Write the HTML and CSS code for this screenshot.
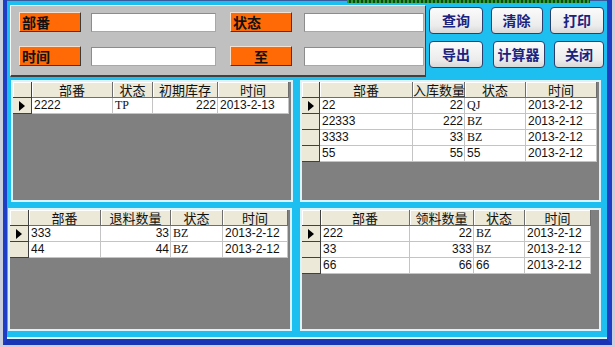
FILE: index.html
```html
<!DOCTYPE html>
<html lang="zh-CN">
<head>
<meta charset="utf-8">
<title>库存查询</title>
<link rel="stylesheet" href="styles.css">
</head>
<body>
<div class="window">
  <div class="titlebar"><span class="dots"></span></div>
  <div class="client">
    <div class="top">
      <div class="filter">
        <div class="frow">
          <div class="lbl">部番</div>
          <div class="inp"></div>
          <div class="lbl gap">状态</div>
          <div class="inp wide"></div>
        </div>
        <div class="frow">
          <div class="lbl">时间</div>
          <div class="inp"></div>
          <div class="lbl gap center">至</div>
          <div class="inp wide"></div>
        </div>
      </div>
      <div class="buttons">
        <div class="brow">
          <div class="btn w54">查询</div>
          <div class="btn w52">清除</div>
          <div class="btn w54">打印</div>
        </div>
        <div class="brow">
          <div class="btn w54">导出</div>
          <div class="btn w52">计算器</div>
          <div class="btn w50">关闭</div>
        </div>
      </div>
    </div>

    <div class="grids">
      <div class="panel">
        <div class="dg g1">
          <div class="h ind"></div><div class="h">部番</div><div class="h">状态</div><div class="h">初期库存</div><div class="h">时间</div>
          <div class="ind cur"><i class="tri"></i></div><div class="c">2222</div><div class="c s">TP</div><div class="c r">222</div><div class="c">2013-2-13</div>
        </div>
      </div>
      <div class="panel">
        <div class="dg g2">
          <div class="h ind"></div><div class="h">部番</div><div class="h">入库数量</div><div class="h">状态</div><div class="h">时间</div>
          <div class="ind cur"><i class="tri"></i></div><div class="c">22</div><div class="c r">22</div><div class="c s">QJ</div><div class="c">2013-2-12</div>
          <div class="ind"></div><div class="c">22333</div><div class="c r">222</div><div class="c s">BZ</div><div class="c">2013-2-12</div>
          <div class="ind"></div><div class="c">3333</div><div class="c r">33</div><div class="c s">BZ</div><div class="c">2013-2-12</div>
          <div class="ind"></div><div class="c">55</div><div class="c r">55</div><div class="c">55</div><div class="c">2013-2-12</div>
        </div>
      </div>
      <div class="panel shift">
        <div class="dg g3">
          <div class="h ind"></div><div class="h">部番</div><div class="h">退料数量</div><div class="h">状态</div><div class="h">时间</div>
          <div class="ind cur"><i class="tri"></i></div><div class="c">333</div><div class="c r">33</div><div class="c s">BZ</div><div class="c">2013-2-12</div>
          <div class="ind"></div><div class="c">44</div><div class="c r">44</div><div class="c s">BZ</div><div class="c">2013-2-12</div>
        </div>
      </div>
      <div class="panel">
        <div class="dg g4">
          <div class="h ind"></div><div class="h">部番</div><div class="h">领料数量</div><div class="h">状态</div><div class="h">时间</div>
          <div class="ind cur"><i class="tri"></i></div><div class="c">222</div><div class="c r">22</div><div class="c s">BZ</div><div class="c">2013-2-12</div>
          <div class="ind"></div><div class="c">33</div><div class="c r">333</div><div class="c s">BZ</div><div class="c">2013-2-12</div>
          <div class="ind"></div><div class="c">66</div><div class="c r">66</div><div class="c">66</div><div class="c">2013-2-12</div>
        </div>
      </div>
    </div>
  </div>
</div>
</body>
</html>
```
FILE: styles.css
```css
* { box-sizing: border-box; }
html, body { margin: 0; padding: 0; }
body {
  width: 615px;
  height: 347px;
  overflow: hidden;
  background: #c9cfdc;
  font-family: "Noto Sans CJK SC", "Liberation Sans", sans-serif;
}
.window {
  margin-left: 3px;
  width: 609px;
  height: 345px;
  border-left: 4px solid #1f3ec6;
  border-right: 5px solid #1f3ec6;
  border-bottom: 6px solid #1934b4;
  background: #1cbff0;
  display: flex;
  flex-direction: column;
}
.titlebar {
  height: 3px;
  background: #1cbff0;
  border-top: 1px solid #3a5a9a;
  display: flex;
}
.dots {
  margin-left: 340px;
  width: 243px;
  height: 3px;
  margin-top: -1px;
  background: repeating-linear-gradient(90deg, #2f9a2f 0 2px, #0d4a16 2px 4px);
}
.client {
  flex: 1;
  border-bottom: 2px solid #e2f6fd;
  padding-top: 2px;
}
.top {
  display: flex;
  align-items: flex-start;
  margin-left: 3px;
  height: 72px;
}
.filter {
  width: 416px;
  height: 72px;
  background: #c0c0c0;
  border-top: 1px solid #ffffff;
  border-left: 1px solid #ffffff;
  border-right: 1px solid #404040;
  border-bottom: 2px solid #404040;
  padding: 6px 0 0 8px;
  display: flex;
  flex-direction: column;
  gap: 14px;
}
.frow {
  display: flex;
  align-items: center;
  height: 20px;
}
.lbl {
  width: 62px;
  height: 20px;
  background: #ff6a06;
  border-top: 1px solid #f4e0d0;
  border-left: 1px solid #f4e0d0;
  border-right: 1px solid #3a3a3a;
  border-bottom: 1px solid #3a3a3a;
  font-weight: 700;
  font-size: 14px;
  line-height: 18px;
  color: #111;
  padding-left: 2px;
}
.lbl.gap { margin-left: 14px; }
.lbl.center { text-align: center; padding-left: 0; }
.inp {
  margin-left: 10px;
  width: 125px;
  height: 19px;
  background: #ffffff;
  border: 1px solid #a8a8a8;
  border-top-color: #8c8c8c;
  border-left-color: #8c8c8c;
}
.inp.wide { margin-left: 12px; width: 120px; }
.buttons {
  margin-left: 3px;
  width: 175px;
  padding-top: 2px;
  display: flex;
  flex-direction: column;
  gap: 7px;
}
.brow {
  display: flex;
  justify-content: space-between;
}
.btn {
  height: 27px;
  border: 1px solid #2a3f6e;
  border-radius: 4px;
  background: linear-gradient(#fbfbfb, #ececec 70%, #d8d8d8);
  color: #1a2380;
  font-weight: 700;
  font-size: 14px;
  line-height: 24px;
  text-align: center;
}
.w54 { width: 54px; }
.w52 { width: 52px; }
.w50 { width: 50px; }

.grids {
  margin-top: 3px;
  margin-left: 4px;
  display: grid;
  grid-template-columns: 282px 301px;
  grid-template-rows: 122px 123px;
  column-gap: 7px;
  row-gap: 6px;
}
.panel {
  border: 2px solid #dcf3fb;
  background: #808080;
  overflow: hidden;
}
.panel.shift {
  margin-left: -3px;
  margin-right: 1px;
}
.dg {
  display: grid;
  grid-auto-rows: 16px;
  width: max-content;
}
.g1 { grid-template-columns: 19px 81px 40px 65px 71px; }
.g2 { grid-template-columns: 18px 93px 52px 61px 71px; }
.g3 { grid-template-columns: 19px 72px 70px 52px 65px; }
.g4 { grid-template-columns: 19px 89px 64px 51px 66px; }

.h {
  background: #ece9d8;
  border-right: 1px solid #6e6e6e;
  border-bottom: 1px solid #6e6e6e;
  box-shadow: inset 1px 1px 0 #ffffff;
  font-size: 13px;
  line-height: 15px;
  text-align: center;
  color: #111;
  white-space: nowrap;
}
.c {
  background: #ffffff;
  border-right: 1px solid #c4c4c4;
  border-bottom: 1px solid #c4c4c4;
  font-family: "Liberation Sans", sans-serif;
  font-size: 12px;
  line-height: 15px;
  padding: 0 2px;
  color: #111;
  white-space: nowrap;
}
.c.r { text-align: right; padding-right: 1px; }
.c.s { font-family: "Liberation Serif", serif; }
.ind {
  background: #ece9d8;
  border-right: 1px solid #404040;
  border-bottom: 1px solid #404040;
  display: flex;
  align-items: center;
  padding-left: 6px;
}
.tri {
  display: block;
  width: 0;
  height: 0;
  border-top: 5px solid transparent;
  border-bottom: 5px solid transparent;
  border-left: 6px solid #000;
}
```
